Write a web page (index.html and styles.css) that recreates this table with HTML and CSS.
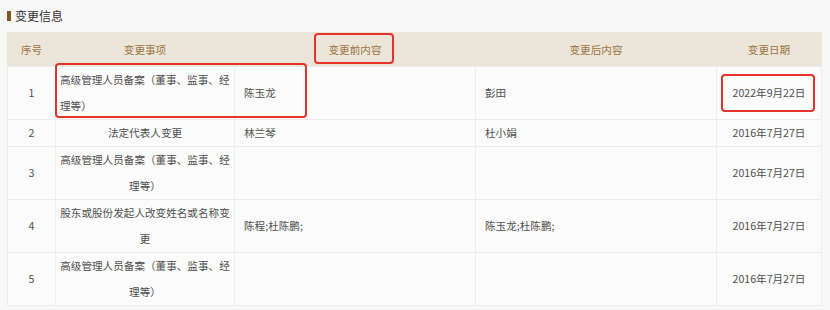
FILE: index.html
```html
<!DOCTYPE html>
<html lang="zh-CN">
<head>
<meta charset="utf-8">
<link rel="stylesheet" href="styles.css">
</head>
<body>
<div class="page">
  <h2 class="title"><span class="bar"></span>变更信息</h2>
  <div class="table-wrap">
    <table class="grid">
      <colgroup>
        <col class="c1"><col class="c2"><col class="c3"><col class="c4"><col class="c5">
      </colgroup>
      <thead>
        <tr><th>序号</th><th>变更事项</th><th>变更前内容</th><th>变更后内容</th><th>变更日期</th></tr>
      </thead>
      <tbody>
        <tr class="two">
          <td class="num">1</td>
          <td class="item left">高级管理人员备案（董事、监事、经理等）</td>
          <td class="txt">陈玉龙</td>
          <td class="txt">彭田</td>
          <td class="date">2022年9月22日</td>
        </tr>
        <tr>
          <td class="num">2</td>
          <td class="item">法定代表人变更</td>
          <td class="txt">林兰琴</td>
          <td class="txt">杜小娟</td>
          <td class="date">2016年7月27日</td>
        </tr>
        <tr>
          <td class="num">3</td>
          <td class="item">高级管理人员备案（董事、监事、经理等）</td>
          <td class="txt"></td>
          <td class="txt"></td>
          <td class="date">2016年7月27日</td>
        </tr>
        <tr>
          <td class="num">4</td>
          <td class="item">股东或股份发起人改变姓名或名称变更</td>
          <td class="txt">陈程;杜陈鹏;</td>
          <td class="txt">陈玉龙;杜陈鹏;</td>
          <td class="date">2016年7月27日</td>
        </tr>
        <tr>
          <td class="num">5</td>
          <td class="item">高级管理人员备案（董事、监事、经理等）</td>
          <td class="txt"></td>
          <td class="txt"></td>
          <td class="date">2016年7月27日</td>
        </tr>
      </tbody>
    </table>
    <div class="mark mark-row"></div>
    <div class="mark mark-head"></div>
    <div class="mark mark-date"></div>
  </div>
</div>
</body>
</html>
```
FILE: styles.css
```css
html, body {
  margin: 0;
  padding: 0;
  background: #f8f8f8;
}
body {
  font-family: "Noto Sans CJK SC", "Noto Sans", sans-serif;
  color: #555;
}
.page {
  padding: 0 9px 0 7px;
}
.title {
  display: flex;
  align-items: center;
  margin: 0;
  height: 32px;
  font-size: 12px;
  font-weight: normal;
  color: #333;
  line-height: 30px;
}
.bar {
  display: inline-block;
  width: 4px;
  height: 10px;
  background: #8a5520;
  margin-right: 4px;
  margin-top: -1px;
}
.table-wrap {
  position: relative;
  width: 814px;
}
.grid {
  width: 814px;
  border-collapse: collapse;
  table-layout: fixed;
  font-size: 10.6px;
  background: #fbfbfb;
}
.c1 { width: 48px; }
.c2 { width: 179px; }
.c3 { width: 241px; }
.c4 { width: 241px; }
.c5 { width: 105px; }
.grid th {
  height: 33px;
  padding: 0;
  background: #ece5da;
  color: #9c7642;
  font-weight: normal;
  text-align: center;
  border: 1px solid #ece5da;
  border-left-color: #f3eee7;
  border-bottom: 1px solid #ebebeb;
}
.grid th:first-child { border-left-color: #ece5da; }
.grid td {
  padding: 0;
  line-height: 26px;
  border: 1px solid #ececec;
  vertical-align: middle;
  color: #4f4f4f;
}
.grid td.num { text-align: center; }
.grid td.item { text-align: center; padding: 0 4px; }
.grid td.item.left { text-align: left; }
.grid td.txt { padding: 0 9px; }
.grid td.date { text-align: center; }
.mark {
  position: absolute;
  border: 2px solid #e5322b;
  border-radius: 4px;
  box-sizing: border-box;
}
.mark-row { left: 48px; top: 31px; width: 252px; height: 55px; }
.mark-head { left: 307px; top: 1px; width: 80px; height: 31px; }
.mark-date { left: 714px; top: 42px; width: 94px; height: 38px; }
```
